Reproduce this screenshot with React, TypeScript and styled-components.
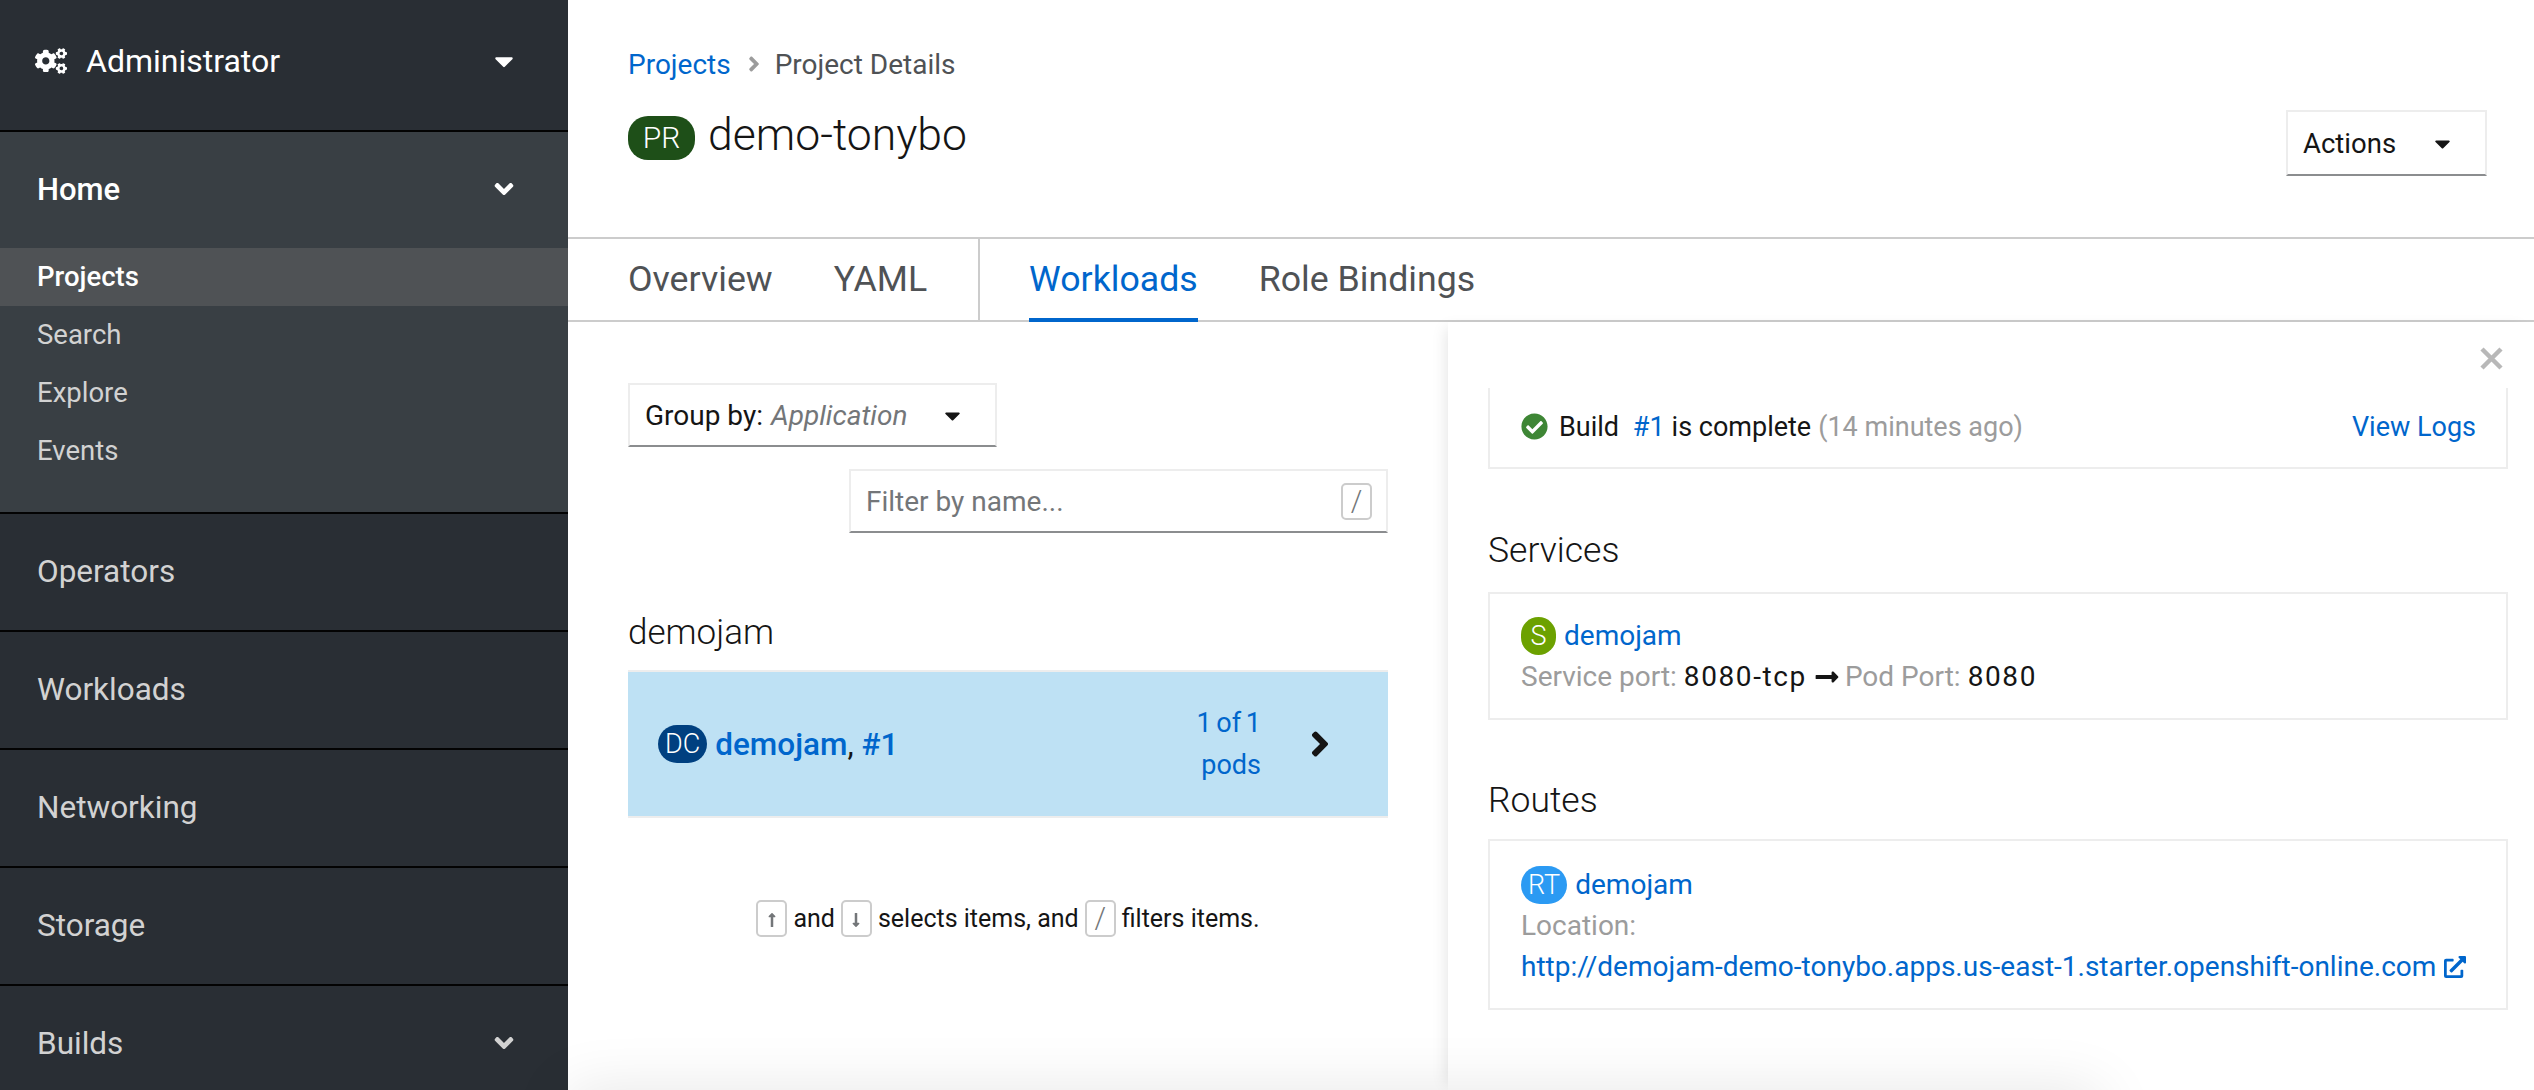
import { ReactElement, ReactNode } from 'react'
import styled, { createGlobalStyle } from 'styled-components'
import {
  FaAngleDown,
  FaAngleRight,
  FaCaretDown,
  FaCheckCircle,
  FaCogs,
  FaExternalLinkAlt,
  FaLongArrowAltDown,
  FaLongArrowAltRight,
  FaLongArrowAltUp,
} from 'react-icons/fa'

const COLOR = {
  nav: '#292e34',
  navOpen: '#393f44',
  navActive: '#4f5255',
  navLine: '#030303',
  navText: '#d2d2d2',
  link: '#0066cc',
  line: '#cccccc',
  soft: '#ededed',
  text: '#151515',
  muted: '#9c9c9c',
}

const GlobalStyle = createGlobalStyle`
  html, body {
    margin: 0;
    background: #fff;
    overflow: hidden;
  }
  * {
    box-sizing: border-box;
  }
  body {
    font-family: Roboto, "Noto Sans", sans-serif;
    color: ${COLOR.text};
  }
`

const Page = styled.div`
  display: flex;
  width: 2534px;
  height: 1090px;
  overflow: hidden;
`

const Sidebar = styled.nav`
  width: 568px;
  flex: none;
  background: ${COLOR.nav};
  color: ${COLOR.navText};
`

const Perspective = styled.div`
  height: 132px;
  padding: 40px 49px 0 35px;
  display: flex;
  align-items: flex-start;
  color: #fff;
  font-size: 32px;
  line-height: 42px;
  border-bottom: 2px solid ${COLOR.navLine};
  > svg {
    font-size: 32px;
    margin-right: 19px;
    margin-top: 5px;
  }
`

const Spacer = styled.span`
  flex: 1;
`

const NavCaret = styled.span<{ $drop?: number }>`
  font-size: 30px;
  display: flex;
  margin-top: ${({ $drop }) => $drop ?? 0}px;
`

const NavGroup = styled.div<{ $open?: boolean }>`
  background: ${({ $open }) => ($open ? COLOR.navOpen : COLOR.nav)};
  border-bottom: 2px solid ${COLOR.navLine};
  padding-bottom: ${({ $open }) => ($open ? '32px' : '0')};
`

const NavHeader = styled.div<{ $open?: boolean }>`
  height: 116px;
  padding: 0 49px 2px 37px;
  display: flex;
  align-items: center;
  font-size: ${({ $open }) => ($open ? '31px' : '31.5px')};
  color: ${({ $open }) => ($open ? '#fff' : COLOR.navText)};
  font-weight: ${({ $open }) => ($open ? 500 : 400)};
`

const NavItem = styled.div<{ $active?: boolean }>`
  height: 58px;
  padding: 0 0 2px 37px;
  display: flex;
  align-items: center;
  font-size: 27.5px;
  background: ${({ $active }) => ($active ? COLOR.navActive : 'transparent')};
  color: ${({ $active }) => ($active ? '#fff' : COLOR.navText)};
  font-weight: ${({ $active }) => ($active ? 500 : 400)};
`

const Main = styled.main`
  flex: 1;
  display: flex;
  flex-direction: column;
  min-width: 0;
`

const PageHead = styled.header`
  height: 237px;
  padding: 45px 47px 0 60px;
  display: flex;
  justify-content: space-between;
  align-items: flex-start;
`

const Breadcrumb = styled.div`
  display: flex;
  align-items: center;
  height: 38px;
  font-size: 28px;
  color: #4f5255;
  a {
    color: ${COLOR.link};
  }
  svg {
    color: #9c9c9c;
    font-size: 24px;
    margin: 0 9px 0 11px;
  }
`

const TitleRow = styled.div`
  display: flex;
  align-items: center;
  margin-top: 33px;
  font-size: 44.5px;
  font-weight: 300;
  gap: 13px;
  line-height: 44px;
`

const TitleText = styled.span`
  position: relative;
  top: -3px;
`

const Badge = styled.span<{ $bg: string; $size: 'lg' | 'md' }>`
  display: inline-flex;
  align-items: center;
  justify-content: center;
  flex: none;
  background: ${({ $bg }) => $bg};
  color: #fff;
  font-weight: 300;
  border-radius: 20px;
  padding: ${({ $size }) => ($size === 'lg' ? '0 10px' : '0 7px')};
  height: ${({ $size }) => ($size === 'lg' ? '44px' : '38px')};
  min-width: ${({ $size }) => ($size === 'lg' ? '67px' : '35px')};
  font-size: ${({ $size }) => ($size === 'lg' ? '30px' : '27px')};
`

const Dropdown = styled.div<{ $width: number; $top?: number }>`
  display: flex;
  align-items: center;
  height: ${({ $top }) => ($top ? '66px' : '64px')};
  width: ${({ $width }) => $width}px;
  margin-top: ${({ $top }) => $top ?? 0}px;
  padding-left: 15px;
  font-size: ${({ $top }) => ($top ? '27.5px' : '28px')};
  background: #fff;
  border: 2px solid ${COLOR.soft};
  border-bottom: 2px solid #8b8d8f;
  em {
    color: #737679;
    margin-left: 8px;
  }
  svg {
    margin-left: auto;
    margin-right: 30px;
    font-size: 25px;
  }
`

const TabBar = styled.div`
  height: 85px;
  padding-left: 60px;
  display: flex;
  border-top: 2px solid ${COLOR.line};
  border-bottom: 2px solid ${COLOR.line};
`

const Tab = styled.div<{ $active?: boolean }>`
  height: 83px;
  display: flex;
  align-items: center;
  margin-right: 61px;
  font-size: 35.7px;
  color: ${({ $active }) => ($active ? COLOR.link : '#4f5255')};
  border-bottom: 4px solid ${({ $active }) => ($active ? COLOR.link : 'transparent')};
`

const TabDivider = styled.div`
  width: 2px;
  background: ${COLOR.line};
  margin: 0 49px 0 -10px;
`

const Body = styled.div`
  flex: 1;
  display: flex;
  position: relative;
  min-height: 0;
  &::after {
    content: '';
    position: absolute;
    left: 0;
    bottom: -60px;
    height: 60px;
    width: 1532px;
    box-shadow: 0 0 60px rgba(3, 3, 3, 0.1);
  }
`

const ListPane = styled.section`
  width: 880px;
  flex: none;
  padding: 61px 60px 0;
`

const FilterBox = styled.div`
  margin: 22px 0 0 221px;
  height: 64px;
  padding: 0 14px 0 15px;
  display: flex;
  align-items: center;
  justify-content: space-between;
  font-size: 28px;
  color: #737679;
  border: 2px solid ${COLOR.soft};
  border-bottom: 2px solid #8b8d8f;
`

const Key = styled.kbd`
  display: inline-flex;
  align-items: center;
  justify-content: center;
  width: 31px;
  height: 37px;
  border: 2px solid ${COLOR.line};
  border-radius: 5px;
  font-family: inherit;
  font-size: 29px;
  font-weight: 300;
  color: #737679;
  background: #fff;
  svg {
    font-size: 16px;
    margin-top: 4px;
  }
`

const GroupName = styled.h2`
  margin: 78px 0 15px;
  font-size: 35px;
  line-height: 44px;
  font-weight: 300;
`

const WorkloadRow = styled.div`
  height: 148px;
  display: flex;
  align-items: center;
  padding: 0 48px 0 30px;
  background: #bee1f4;
  border-top: 2px solid ${COLOR.soft};
  border-bottom: 2px solid ${COLOR.soft};
  font-size: 31.5px;
  a {
    color: ${COLOR.link};
    font-weight: 500;
  }
`

const WorkloadName = styled.span`
  margin-left: 8px;
`

const PodCount = styled.div`
  margin-left: auto;
  text-align: right;
  font-size: 27px;
  line-height: 42px;
  word-spacing: -2px;
  color: ${COLOR.link};
  width: 100px;
`

const RowChevron = styled(FaAngleRight)`
  font-size: 40px;
  color: #151515;
  margin-left: 39px;
`

const Hint = styled.div`
  margin-top: 80px;
  height: 40px;
  display: flex;
  align-items: center;
  justify-content: center;
  gap: 6px;
  font-size: 25px;
`

const DetailPane = styled.section`
  flex: 1;
  position: relative;
  padding: 66px 26px 0 40px;
  background: #fff;
  box-shadow: -8px 0 14px -6px rgba(3, 3, 3, 0.1);
`

const CloseIcon = styled.svg`
  position: absolute;
  top: 25px;
  right: 31px;
  width: 23px;
  height: 23px;
  stroke: #b8b8b8;
  stroke-width: 4.5;
`

const InfoCard = styled.div<{ $height: number; $top?: number }>`
  height: ${({ $height }) => $height}px;
  border: 2px solid ${COLOR.soft};
  padding: ${({ $top }) => $top ?? 21}px 30px 0 31px;
  font-size: 28px;
`

const BuildCard = styled(InfoCard)`
  border-top: none;
  font-size: 27px;
`

const InfoLine = styled.div<{ $gap?: number }>`
  display: flex;
  align-items: center;
  height: 41px;
  gap: ${({ $gap }) => $gap ?? 7}px;
  white-space: nowrap;
  a {
    color: ${COLOR.link};
    display: inline-flex;
    align-items: center;
  }
`

const Muted = styled.span`
  color: ${COLOR.muted};
`

const PortValue = styled.span`
  letter-spacing: 1.6px;
`

const StatusIcon = styled(FaCheckCircle)`
  color: #3e8635;
  font-size: 27px;
  margin-right: 4px;
`

const PortArrow = styled(FaLongArrowAltRight)`
  font-size: 26px;
  margin-right: -2px;
`

const ExternalIcon = styled(FaExternalLinkAlt)`
  font-size: 22px;
  margin-left: 8px;
`

const SectionTitle = styled.h3<{ $gap: number; $below: number }>`
  margin: ${({ $gap }) => $gap}px 0 ${({ $below }) => $below}px;
  font-size: 35.5px;
  line-height: 44px;
  font-weight: 300;
`

const Nav = ({ label, caret }: { label: string; caret?: boolean }): ReactElement => (
  <NavGroup>
    <NavHeader>
      {label}
      <Spacer />
      {caret && (
        <NavCaret>
          <FaAngleDown />
        </NavCaret>
      )}
    </NavHeader>
  </NavGroup>
)

const Tabs = (): ReactElement => (
  <TabBar>
    <Tab>Overview</Tab>
    <Tab>YAML</Tab>
    <TabDivider />
    <Tab $active>Workloads</Tab>
    <Tab>Role Bindings</Tab>
  </TabBar>
)

const Link = ({ children }: { children: ReactNode }): ReactElement => <a>{children}</a>

const App = (): ReactElement => {
  return (
    <Page>
      <GlobalStyle />
      <Sidebar>
        <Perspective>
          <FaCogs />
          Administrator
          <Spacer />
          <NavCaret $drop={6}>
            <FaCaretDown />
          </NavCaret>
        </Perspective>
        <NavGroup $open>
          <NavHeader $open>
            Home
            <Spacer />
            <NavCaret>
              <FaAngleDown />
            </NavCaret>
          </NavHeader>
          <NavItem $active>Projects</NavItem>
          <NavItem>Search</NavItem>
          <NavItem>Explore</NavItem>
          <NavItem>Events</NavItem>
        </NavGroup>
        <Nav label="Operators" />
        <Nav label="Workloads" />
        <Nav label="Networking" />
        <Nav label="Storage" />
        <Nav label="Builds" caret />
      </Sidebar>
      <Main>
        <PageHead>
          <div>
            <Breadcrumb>
              <Link>Projects</Link>
              <FaAngleRight />
              Project Details
            </Breadcrumb>
            <TitleRow>
              <Badge $bg="#1e4f18" $size="lg">PR</Badge>
              <TitleText>demo-tonybo</TitleText>
            </TitleRow>
          </div>
          <Dropdown $width={201} $top={65}>
            Actions
            <FaCaretDown />
          </Dropdown>
        </PageHead>
        <Tabs />
        <Body>
          <ListPane>
            <Dropdown $width={369}>
              Group by: <em>Application</em>
              <FaCaretDown />
            </Dropdown>
            <FilterBox>
              Filter by name...
              <Key>/</Key>
            </FilterBox>
            <GroupName>demojam</GroupName>
            <WorkloadRow>
              <Badge $bg="#004080" $size="md">DC</Badge>
              <WorkloadName>
                <Link>demojam</Link>, <Link>#1</Link>
              </WorkloadName>
              <PodCount>
                1 of 1
                <br />
                pods
              </PodCount>
              <RowChevron />
            </WorkloadRow>
            <Hint>
              <Key>
                <FaLongArrowAltUp />
              </Key>
              and
              <Key>
                <FaLongArrowAltDown />
              </Key>
              selects items, and
              <Key>/</Key>
              filters items.
            </Hint>
          </ListPane>
          <DetailPane>
            <CloseIcon viewBox="0 0 23 23">
              <path d="M2 2L21 21M21 2L2 21" />
            </CloseIcon>
            <BuildCard $height={81} $top={18}>
              <InfoLine>
                <StatusIcon />
                Build&nbsp;
                <Link>#1</Link>
                is complete
                <Muted>(14 minutes ago)</Muted>
                <Spacer />
                <Link>View Logs</Link>
              </InfoLine>
            </BuildCard>
            <SectionTitle $gap={59} $below={20}>Services</SectionTitle>
            <InfoCard $height={128}>
              <InfoLine $gap={8}>
                <Badge $bg="#6ca100" $size="md">S</Badge>
                <Link>demojam</Link>
              </InfoLine>
              <InfoLine>
                <Muted>Service port:</Muted>
                <PortValue>8080-tcp</PortValue>
                <PortArrow />
                <Muted>Pod Port:</Muted>
                <PortValue>8080</PortValue>
              </InfoLine>
            </InfoCard>
            <SectionTitle $gap={58} $below={17}>Routes</SectionTitle>
            <InfoCard $height={171} $top={23}>
              <InfoLine $gap={8}>
                <Badge $bg="#2b9af3" $size="md">RT</Badge>
                <Link>demojam</Link>
              </InfoLine>
              <InfoLine>
                <Muted>Location:</Muted>
              </InfoLine>
              <InfoLine>
                <Link>
                  http://demojam-demo-tonybo.apps.us-east-1.starter.openshift-online.com
                  <ExternalIcon />
                </Link>
              </InfoLine>
            </InfoCard>
          </DetailPane>
        </Body>
      </Main>
    </Page>
  )
}

export default App
